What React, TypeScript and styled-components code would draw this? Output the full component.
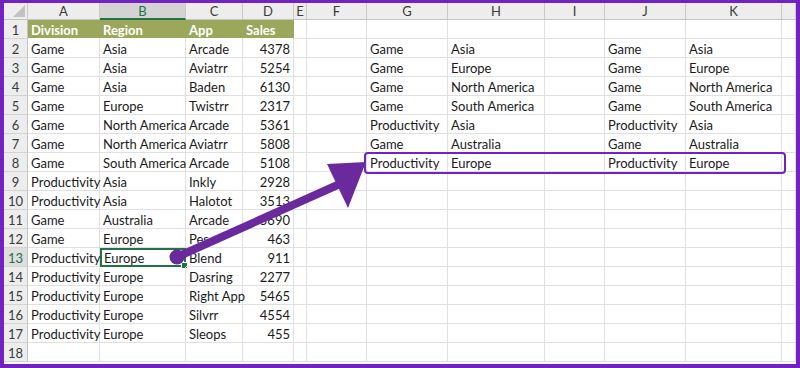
import React from 'react'
import styled, { createGlobalStyle, css } from 'styled-components'

const GlobalStyle = createGlobalStyle`
  html, body {
    margin: 0;
    padding: 0;
    background: #ffffff;
  }
`

const purple = '#7421c4'
const arrowPurple = '#6a2a9e'
const excelGreen = '#217346'

const Page = styled.div`
  position: relative;
  width: 800px;
  height: 368px;
  box-sizing: border-box;
  padding: 3px 4px 4px 4px;
  background: ${purple};
  overflow: hidden;
`

const Sheet = styled.div`
  display: grid;
  grid-template-columns: 24px 72px 86px 57px 51px 13px 60px 81px 97px 60px 81px 96px 1fr;
  grid-template-rows: 17px repeat(18, 19px);
  height: 100%;
  overflow: hidden;
  background: #ffffff;
  font-family: Lato, 'Open Sans', sans-serif;
  font-size: 13px;
  color: #1b1b1b;
`

const ColHead = styled.div<{ $selected?: boolean }>`
  display: flex;
  align-items: center;
  justify-content: center;
  box-sizing: border-box;
  background: ${(p) => (p.$selected ? '#d3d3d3' : '#ededed')};
  border-right: 1px solid #c9c9c9;
  border-bottom: ${(p) => (p.$selected ? `2px solid ${excelGreen}` : '1px solid #c4c4c4')};
  color: ${(p) => (p.$selected ? excelGreen : '#3a3a3a')};
  font-size: 13px;
`

const Corner = styled(ColHead)`
  position: relative;
  overflow: hidden;

  &::after {
    content: '';
    position: absolute;
    right: 2px;
    bottom: 2px;
    width: 0;
    height: 0;
    border-left: 12px solid transparent;
    border-bottom: 12px solid #c2c2c2;
  }
`

const RowHead = styled.div<{ $selected?: boolean }>`
  display: flex;
  align-items: center;
  justify-content: center;
  box-sizing: border-box;
  padding-top: 1px;
  background: ${(p) => (p.$selected ? '#dedede' : '#ededed')};
  border-right: 1px solid #c4c4c4;
  border-bottom: 1px solid #d4d4d4;
  color: ${(p) => (p.$selected ? excelGreen : '#3a3a3a')};
  font-size: 13px;
`

const Cell = styled.div<{ $head?: boolean; $num?: boolean; $active?: boolean }>`
  position: relative;
  display: flex;
  align-items: center;
  justify-content: ${(p) => (p.$num ? 'flex-end' : 'flex-start')};
  box-sizing: border-box;
  padding: 1px 3px 0 3px;
  white-space: nowrap;
  overflow: visible;
  border-right: 1px solid #e0e0e0;
  border-bottom: 1px solid #e0e0e0;
  ${(p) =>
    p.$head &&
    css`
      background: #9ba85b;
      color: #ffffff;
      font-weight: 700;
      border-right-color: #9ba85b;
      border-bottom-color: #ffffff;
    `}
  ${(p) =>
    p.$active &&
    css`
      border: 2px solid ${excelGreen};
      padding: 0 2px 0 2px;

      &::after {
        content: '';
        position: absolute;
        right: -4px;
        bottom: -4px;
        width: 5px;
        height: 5px;
        background: ${excelGreen};
        border: 1px solid #ffffff;
      }
    `}
`

const Highlight = styled.div`
  position: absolute;
  left: 364px;
  top: 152px;
  width: 422px;
  height: 22px;
  box-sizing: border-box;
  border: 2px solid ${purple};
  border-radius: 4px;
  pointer-events: none;
`

const ArrowLayer = styled.svg`
  position: absolute;
  left: 0;
  top: 0;
  width: 800px;
  height: 368px;
  pointer-events: none;
`

const columns = ['A', 'B', 'C', 'D', 'E', 'F', 'G', 'H', 'I', 'J', 'K', '']

const source: [string, string, string, string][] = [
  ['Game', 'Asia', 'Arcade', '4378'],
  ['Game', 'Asia', 'Aviatrr', '5254'],
  ['Game', 'Asia', 'Baden', '6130'],
  ['Game', 'Europe', 'Twistrr', '2317'],
  ['Game', 'North America', 'Arcade', '5361'],
  ['Game', 'North America', 'Aviatrr', '5808'],
  ['Game', 'South America', 'Arcade', '5108'],
  ['Productivity', 'Asia', 'Inkly', '2928'],
  ['Productivity', 'Asia', 'Halotot', '3513'],
  ['Game', 'Australia', 'Arcade', '5690'],
  ['Game', 'Europe', 'Pes', '463'],
  ['Productivity', 'Europe', 'Blend', '911'],
  ['Productivity', 'Europe', 'Dasring', '2277'],
  ['Productivity', 'Europe', 'Right App', '5465'],
  ['Productivity', 'Europe', 'Silvrr', '4554'],
  ['Productivity', 'Europe', 'Sleops', '455'],
]

const unique: [string, string][] = [
  ['Game', 'Asia'],
  ['Game', 'Europe'],
  ['Game', 'North America'],
  ['Game', 'South America'],
  ['Productivity', 'Asia'],
  ['Game', 'Australia'],
  ['Productivity', 'Europe'],
]

const rowValues = (row: number): string[] => {
  if (row === 1) return ['Division', 'Region', 'App', 'Sales', '', '', '', '', '', '', '', '']
  const src = source[row - 2]
  const uq = unique[row - 2]
  const out = Array(12).fill('')
  if (src) [out[0], out[1], out[2], out[3]] = src
  if (uq) {
    out[6] = uq[0]
    out[7] = uq[1]
    out[9] = uq[0]
    out[10] = uq[1]
  }
  return out
}

const App: React.FC = () => {
  const rows = Array.from({ length: 18 }, (_, i) => i + 1)

  return (
    <Page>
      <GlobalStyle />
      <Sheet>
        <Corner />
        {columns.map((c, i) => (
          <ColHead key={`h${i}`} $selected={c === 'B'}>
            {c}
          </ColHead>
        ))}
        {rows.map((r) => (
          <React.Fragment key={r}>
            <RowHead $selected={r === 13}>{r}</RowHead>
            {rowValues(r).map((v, ci) => (
              <Cell
                key={ci}
                $head={r === 1 && ci < 4}
                $num={ci === 3 && r > 1}
                $active={r === 13 && ci === 1}
              >
                {v}
              </Cell>
            ))}
          </React.Fragment>
        ))}
      </Sheet>
      <Highlight />
      <ArrowLayer viewBox="0 0 800 368">
        <line x1="177" y1="257" x2="342" y2="183" stroke={arrowPurple} strokeWidth="8" />
        <circle cx="177" cy="257" r="7.5" fill={arrowPurple} />
        <polygon points="327,164 366,162 348,208" fill={arrowPurple} />
      </ArrowLayer>
    </Page>
  )
}

export default App
